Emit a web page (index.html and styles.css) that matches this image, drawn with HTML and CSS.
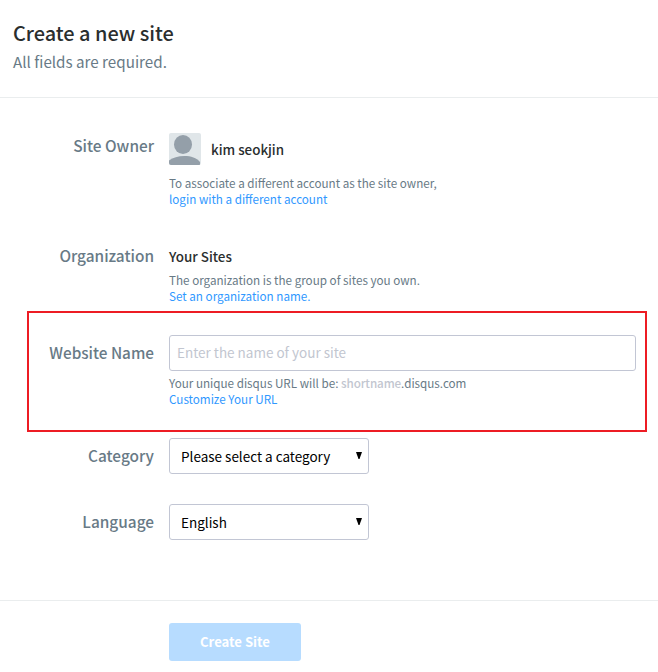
FILE: index.html
```html
<!DOCTYPE html>
<html lang="en">
<head>
<meta charset="utf-8">
<title>Create a new site</title>
<link rel="stylesheet" href="styles.css">
</head>
<body>
<header class="page-header">
  <h1 class="title">Create a new site</h1>
  <p class="subtitle">All fields are required.</p>
</header>
<form>
  <div class="fields">
    <div class="row owner-row">
      <div class="label">Site Owner</div>
      <div>
        <div class="owner">
          <svg class="avatar" viewBox="0 0 32 32" aria-hidden="true">
            <rect width="32" height="32" fill="#e0e6e9"/>
            <ellipse cx="14" cy="11.5" rx="9" ry="9.5" fill="#949fa9"/>
            <path d="M0 27.5C4 24.5 9 23 15.500 23C22 23 27.500 24.800 31 29V32H0Z" fill="#949fa9"/>
          </svg>
          <span class="value">kim seokjin</span>
        </div>
        <p class="help owner-help">To associate a different account as the site owner,<br><a href="#">login with a different account</a></p>
      </div>
    </div>
    <div class="row org-row">
      <div class="label">Organization</div>
      <div>
        <div class="value org-name">Your Sites</div>
        <p class="help org-help">The organization is the group of sites you own.<br><a href="#">Set an organization name.</a></p>
      </div>
    </div>
    <div class="row name-row">
      <label class="label" for="name">Website Name</label>
      <div>
        <input class="control" id="name" type="text" placeholder="Enter the name of your site">
        <p class="help url-help">Your unique disqus URL will be: <span class="shortname">shortname</span><span class="domain">.disqus.com</span><br><a href="#">Customize Your URL</a></p>
      </div>
    </div>
    <div class="row select-row">
      <div class="label">Category</div>
      <div class="control select"><span>Please select a category</span><svg class="arrow" viewBox="0 0 6 7"><path d="M0 0H6L3.500 7H2.500Z"/></svg></div>
    </div>
    <div class="row select-row">
      <div class="label">Language</div>
      <div class="control select"><span>English</span><svg class="arrow" viewBox="0 0 6 7"><path d="M0 0H6L3.500 7H2.500Z"/></svg></div>
    </div>
  </div>
  <footer class="actions">
    <button class="submit" type="button">Create Site</button>
  </footer>
</form>
</body>
</html>
```
FILE: styles.css
```css
* { box-sizing: border-box; }
body {
  margin: 0;
  height: 672px;
  overflow: hidden;
  background: #fff;
  color: #2a2e2e;
  font-family: "Noto Sans CJK SC", "Noto Sans", sans-serif;
}
h1, p { margin: 0; }
a { color: #2f98ff; text-decoration: none; }

.page-header {
  height: 98px;
  padding: 18px 13px 0;
  border-bottom: 1px solid #eaedee;
}
.title { font-size: 19.9px; font-weight: 500; line-height: 29px; }
.subtitle { font-size: 15.2px; line-height: 29px; color: #687a86; }

.fields { height: 502px; padding-top: 35px; }
.row {
  display: grid;
  grid-template-columns: 154px 467px;
  column-gap: 15px;
  align-items: start;
}
.label {
  font-size: 15.4px;
  font-weight: 500;
  line-height: 24px;
  text-align: right;
  color: #687a86;
}
.value { font-size: 13.4px; font-weight: 500; line-height: 24px; }
.help { font-size: 11.67px; line-height: 16px; color: #687a86; white-space: nowrap; }

.owner-row { height: 110px; }
.owner { display: flex; align-items: center; gap: 10px; height: 32px; }
.avatar { width: 32px; height: 32px; border-radius: 2px; }
.owner-help { margin-top: 10px; }

.org-row { height: 68px; }
.org-name { margin-top: 1px; }
.org-help { margin-top: 4px; }

.name-row {
  width: 620px;
  height: 121px;
  margin: 0 0 6px 27px;
  padding-top: 22px;
  border: 2px solid #ed1c24;
  grid-template-columns: 125px 467px;
}
.name-row .label { margin-top: 5px; font-size: 15.3px; }
.url-help { margin-top: 4px; }
.shortname { color: #c2c6d0; font-weight: 500; letter-spacing: -0.1px; }

.control {
  display: block;
  width: 100%;
  height: 36px;
  border: 1px solid #c2c6d4;
  border-radius: 3px;
  background: #fff;
  font-family: inherit;
  font-size: 13.5px;
}
input.control { padding: 0 7px 2px; outline: 0; }
input.control::placeholder { color: #c2c6d0; opacity: 1; }

.select-row { height: 66px; }
.select-row .label { margin-top: 5px; }
.select {
  display: flex;
  align-items: center;
  justify-content: space-between;
  width: 200px;
  padding: 0 6px 0 11px;
  line-height: 24px;
  color: #000;
}
.arrow { width: 6px; height: 7px; margin-bottom: 1px; }

.actions { padding: 22px 0 0 169px; border-top: 1px solid #eaedee; }
.submit {
  display: block;
  width: 132px;
  height: 38px;
  padding: 0;
  border: 0;
  border-radius: 3px;
  background: #b7dcff;
  color: #fff;
  font: 700 13.1px/24px "Noto Sans CJK SC", sans-serif;
}
```
